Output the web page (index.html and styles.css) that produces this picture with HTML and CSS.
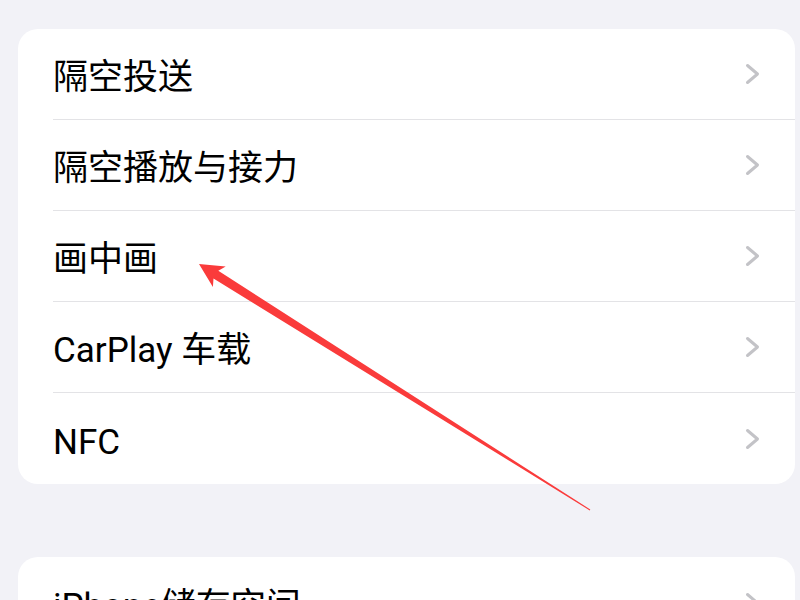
FILE: index.html
```html
<!DOCTYPE html>
<html lang="zh-CN">
<head>
<meta charset="utf-8">
<link rel="stylesheet" href="styles.css">
</head>
<body>
<div class="page">
  <div class="card">
    <div class="row"><div class="row-inner"><span class="label">隔空投送</span><svg class="chev" viewBox="0 0 15 22"><polyline points="2.5,2.5 12.5,11 2.5,19.5"/></svg></div></div>
    <div class="row"><div class="row-inner"><span class="label">隔空播放与接力</span><svg class="chev" viewBox="0 0 15 22"><polyline points="2.5,2.5 12.5,11 2.5,19.5"/></svg></div></div>
    <div class="row"><div class="row-inner"><span class="label">画中画</span><svg class="chev" viewBox="0 0 15 22"><polyline points="2.5,2.5 12.5,11 2.5,19.5"/></svg></div></div>
    <div class="row"><div class="row-inner"><span class="label">CarPlay 车载</span><svg class="chev" viewBox="0 0 15 22"><polyline points="2.5,2.5 12.5,11 2.5,19.5"/></svg></div></div>
    <div class="row"><div class="row-inner"><span class="label">NFC</span><svg class="chev" viewBox="0 0 15 22"><polyline points="2.5,2.5 12.5,11 2.5,19.5"/></svg></div></div>
  </div>
  <div class="card card-second">
    <div class="row"><div class="row-inner"><span class="label">iPhone储存空间</span><svg class="chev" viewBox="0 0 15 22"><polyline points="2.5,2.5 12.5,11 2.5,19.5"/></svg></div></div>
  </div>
</div>
<svg class="arrow" width="800" height="600" viewBox="0 0 800 600">
  <polygon points="199,264 225.7,266.6 218.3,270.8 590.3,509.6 589.7,510.4 213.5,278.5 212.9,286.9"/>
</svg>
</body>
</html>
```
FILE: styles.css
```css
html, body {
  margin: 0;
  padding: 0;
  background: #f2f2f7;
  width: 800px;
  height: 600px;
  overflow: hidden;
  font-family: Roboto, "Noto Sans CJK SC", sans-serif;
  color: #000;
}
.page {
  padding: 29px 5px 0 18px;
  display: flex;
  flex-direction: column;
  gap: 73px;
}
.card {
  background: #fff;
  border-radius: 20px;
  overflow: hidden;
}
.row {
  padding-left: 35px;
}
.row-inner {
  box-sizing: border-box;
  height: 91px;
  display: flex;
  align-items: center;
  justify-content: space-between;
  padding-right: 35px;
  border-bottom: 1px solid #e3e3e6;
}
.row:last-child .row-inner {
  border-bottom: none;
}
.label {
  font-size: 35px;
  line-height: 1.2;
  margin-top: 8px;
}
.chev {
  width: 15px;
  height: 22px;
  fill: none;
  stroke: #c3c3c7;
  stroke-width: 3;
  stroke-linecap: round;
  stroke-linejoin: round;
}
.arrow {
  position: absolute;
  left: 0;
  top: 0;
  fill: #fa3b3b;
}
```
